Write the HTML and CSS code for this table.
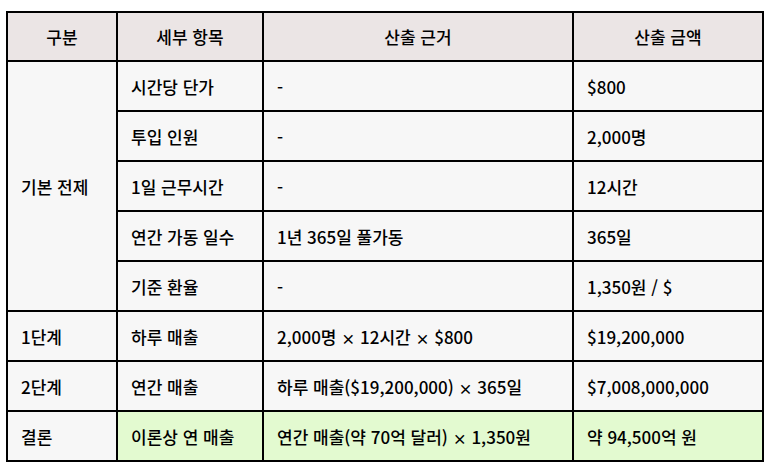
FILE: index.html
```html
<!DOCTYPE html>
<html lang="ko">
<head>
<meta charset="utf-8">
<link rel="stylesheet" href="styles.css">
</head>
<body>
<table class="calc">
  <colgroup>
    <col class="c1"><col class="c2"><col class="c3"><col class="c4">
  </colgroup>
  <thead>
    <tr><th>구분</th><th>세부 항목</th><th>산출 근거</th><th>산출 금액</th></tr>
  </thead>
  <tbody>
    <tr><td rowspan="5">기본 전제</td><td>시간당 단가</td><td>-</td><td>$800</td></tr>
    <tr><td>투입 인원</td><td>-</td><td>2,000명</td></tr>
    <tr><td>1일 근무시간</td><td>-</td><td>12시간</td></tr>
    <tr><td>연간 가동 일수</td><td>1년 365일 풀가동</td><td>365일</td></tr>
    <tr><td>기준 환율</td><td>-</td><td>1,350원 / $</td></tr>
    <tr><td>1단계</td><td>하루 매출</td><td>2,000명 <span class="x">×</span> 12시간 <span class="x">×</span> $800</td><td>$19,200,000</td></tr>
    <tr><td>2단계</td><td>연간 매출</td><td>하루 매출($19,200,000) <span class="x">×</span> 365일</td><td>$7,008,000,000</td></tr>
    <tr class="result"><td>결론</td><td class="hl">이론상 연 매출</td><td class="hl">연간 매출(약 70억 달러) <span class="x">×</span> 1,350원</td><td class="hl">약 94,500억 원</td></tr>
  </tbody>
</table>
</body>
</html>
```
FILE: styles.css
```css
html, body {
  margin: 0;
  padding: 0;
  background: #ffffff;
}
body {
  padding: 11px 0 0 6px;
  font-family: "Noto Sans CJK KR", "Noto Sans", sans-serif;
  color: #000;
}
.calc {
  border-collapse: collapse;
  table-layout: fixed;
  width: 756px;
  font-size: 17px;
  font-weight: 500;
}
.c1 { width: 110px; }
.c2 { width: 146px; }
.c3 { width: 310px; }
.c4 { width: 190px; }
.calc th, .calc td {
  border: 2px solid #000;
  height: 48px;
  padding: 0 0 0 13px;
  vertical-align: middle;
  text-align: left;
  background: #f7f7f7;
  white-space: nowrap;
  line-height: 1;
}
.calc th {
  background: #ebe5e5;
  font-weight: 500;
  text-align: center;
  padding: 0;
  height: 47px;
}
.calc td.hl {
  background: #e3fad0;
}
.x {
  font-size: 14px;
  font-weight: 700;
}
```
